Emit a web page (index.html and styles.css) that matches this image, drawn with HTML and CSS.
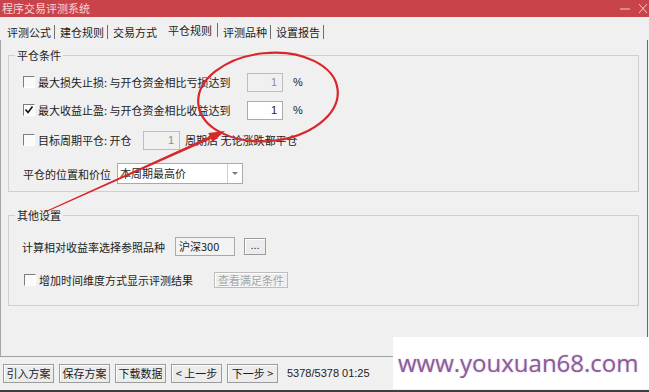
FILE: index.html
```html
<!DOCTYPE html>
<html lang="zh-CN">
<head>
    <meta charset="UTF-8">
    <title>程序交易评测系统</title>
    <link rel="stylesheet" href="styles.css">
</head>
<body>
<div class="window">
    <div class="titlebar">
        <span class="title">程序交易评测系统</span>
        <span class="controls">
            <svg width="11" height="11" viewBox="0 0 11 11"><line x1="0" y1="6" x2="10" y2="6" stroke="#f3c9c9" stroke-width="1"/></svg>
            <svg width="10" height="11" viewBox="0 0 10 11"><path d="M1 1 L9 10 M9 1 L1 10" stroke="#f3c9c9" stroke-width="1" fill="none"/></svg>
        </span>
    </div>

    <div class="tabs">
        <span class="tab">评测公式</span>
        <span class="tab">建仓规则</span>
        <span class="tab pre">交易方式</span>
        <span class="tab active">平仓规则</span>
        <span class="tab">评测品种</span>
        <span class="tab">设置报告</span>
    </div>

    <div class="panel">
        <fieldset class="group close-cond">
            <legend>平仓条件</legend>
            <div class="row row-loss">
                <span class="chk"></span>
                <span class="lbl lbl-long">最大损失止损: 与开仓资金相比亏损达到</span>
                <span class="field num off">1</span>
                <span class="pct">%</span>
            </div>
            <div class="row row-gain">
                <span class="chk"><svg width="10" height="10" viewBox="0 0 10 10"><path d="M1.5 4.5 L4 7.5 L8.5 1.5" stroke="#111" stroke-width="1.6" fill="none"/></svg></span>
                <span class="lbl lbl-long">最大收益止盈: 与开仓资金相比收益达到</span>
                <span class="field num">1</span>
                <span class="pct">%</span>
            </div>
            <div class="row row-period">
                <span class="chk"></span>
                <span class="lbl lbl-mid">目标周期平仓: 开仓</span>
                <span class="field num off short">1</span>
                <span class="lbl after">周期后 无论涨跌都平仓</span>
            </div>
            <div class="row row-price">
                <span class="lbl lbl-pos">平仓的位置和价位</span>
                <span class="combo">
                    <span class="combo-text">本周期最高价</span>
                    <span class="combo-btn"><span class="arrow"></span></span>
                </span>
            </div>
        </fieldset>

        <fieldset class="group other">
            <legend>其他设置</legend>
            <div class="row row-ref">
                <span class="lbl lbl-ref">计算相对收益率选择参照品种</span>
                <span class="field text">沪深300</span>
                <span class="btn dots">...</span>
            </div>
            <div class="row row-time">
                <span class="chk"></span>
                <span class="lbl lbl-time">增加时间维度方式显示评测结果</span>
                <span class="btn show off">查看满足条件</span>
            </div>
        </fieldset>
    </div>

    <div class="toolbar">
        <span class="btn tool">引入方案</span>
        <span class="btn tool">保存方案</span>
        <span class="btn tool">下载数据</span>
        <span class="btn tool">&lt; 上一步</span>
        <span class="btn tool">下一步 &gt;</span>
        <span class="status">5378/5378 01:25</span>
    </div>

    <!-- red hand-drawn marks over the dialog -->
    <svg class="marks" width="649" height="392" viewBox="0 0 649 392">
        <ellipse cx="268" cy="97" rx="70" ry="44" transform="rotate(-6 268 97)" fill="none" stroke="#d8262b" stroke-width="2.2"/>
        <polygon points="45.2,212.4 44.8,211.6 209.8,136.2 211,139" fill="#d8262b"/>
        <polygon points="225,131 208.3,133 212.5,142.2" fill="#d8262b"/>
    </svg>

    <div class="watermark">www.youxuan68.com</div>
</div>
</body>
</html>
```

FILE: styles.css
```css
body {
    margin: 0;
    font-family: "Noto Sans CJK SC", "Liberation Sans", sans-serif;
    font-size: 11px;
    color: #1c1c1c;
}
.window {
    position: relative;
    width: 649px;
    height: 392px;
    background: #f0f0f0;
    overflow: hidden;
}
.titlebar {
    height: 17px;
    background: #c8434a;
    color: #f6d6d6;
    display: flex;
    align-items: center;
    justify-content: space-between;
    padding: 0 1px 0 2px;
}
.title {
    line-height: 17px;
}
.controls {
    display: flex;
    gap: 7px;
}
.tabs {
    height: 23px;
    box-sizing: border-box;
    display: flex;
    align-items: flex-end;
    padding: 0 0 1px 2px;
}
.tab {
    line-height: 14px;
    padding: 0 3px 0 5px;
    border-right: 1px solid #6e6e6e;
}
.tab.pre {
    border-right-color: transparent;
}
.tab.active {
    padding: 0 5px 0 7px;
    margin-bottom: 2px;
}
.panel {
    height: 316px;
    box-sizing: border-box;
    margin-right: 1px;
    padding-top: 8px;
    border-left: 1px solid #a6a6a6;
    border-right: 1px solid #6a6a6a;
}
.group {
    margin: 0 8px 0 7px;
    padding: 0 0 7px 6px;
    border: 1px solid #d0d0d0;
    min-width: 0;
}
.group legend {
    padding: 0 2px;
    line-height: 14px;
}
.other {
    margin-top: 16px;
    padding-bottom: 16px;
}
.row {
    display: flex;
    align-items: center;
    height: 20px;
    margin-left: 8px;
}
.row-loss { margin-top: 10px; }
.row-gain { margin-top: 8px; }
.row-period { margin-top: 10px; }
.row-price { margin-top: 13px; height: 21px; }
.row-ref { margin-top: 15px; height: 19px; margin-left: 7px; }
.row-time { margin-top: 15px; height: 18px; margin-left: 9px; }

.lbl {
    line-height: 14px;
    white-space: nowrap;
}
.lbl-long { width: 209px; }
.lbl-mid { width: 105px; }
.lbl-pos { width: 94px; }
.lbl-ref { width: 153px; }
.lbl-time { width: 176px; }
.after { margin-left: 5px; }
.chk {
    width: 10px;
    height: 10px;
    margin-right: 3px;
    background: #fafafa;
    border-top: 1px solid #7d7d7d;
    border-left: 1px solid #7d7d7d;
    border-right: 1px solid #fff;
    border-bottom: 1px solid #fff;
    display: flex;
}
.field {
    height: 19px;
    box-sizing: border-box;
    border: 1px solid #a9a9a9;
    background: #fff;
    font-family: "Liberation Sans", sans-serif;
    line-height: 17px;
}
.num {
    width: 36px;
    text-align: right;
    padding-right: 5px;
}
.num.short { width: 37px; }
.off {
    background: #f0f0f0;
    color: #8c8c8c;
    border-color: #bdbdbd;
}
.pct {
    margin-left: 10px;
    font-family: "Liberation Sans", sans-serif;
}
.combo {
    width: 126px;
    height: 21px;
    box-sizing: border-box;
    border: 1px solid #a9a9a9;
    background: #fff;
    display: flex;
}
.combo-text {
    flex: 1;
    padding-left: 2px;
    line-height: 19px;
}
.combo-btn {
    width: 14px;
    border-left: 1px solid #cfcfcf;
    display: flex;
    align-items: center;
    justify-content: center;
}
.arrow {
    width: 0;
    height: 0;
    border-left: 3px solid transparent;
    border-right: 3px solid transparent;
    border-top: 3px solid #7a7a7a;
}
.text {
    width: 60px;
    background: #f3f3f3;
    padding-left: 3px;
    font-family: "Noto Sans CJK SC", sans-serif;
}
.btn {
    box-sizing: border-box;
    border: 1px solid #9c9c9c;
    background: #ececec;
    box-shadow: inset 1px 1px 0 #fff;
    text-align: center;
    white-space: nowrap;
}
.dots {
    width: 22px;
    height: 17px;
    margin-left: 9px;
    line-height: 12px;
    font-family: "Liberation Sans", sans-serif;
}
.show {
    width: 74px;
    height: 16px;
    line-height: 14px;
    margin-left: -1px;
}
.btn.off {
    background: #eeeeee;
    color: #a3a3a3;
    border-color: #bcbcbc;
    text-shadow: 1px 1px 0 #fff;
}
.toolbar {
    height: 36px;
    box-sizing: border-box;
    border-top: 1px solid #a0a0a0;
    border-bottom: 2px solid #3e3e3e;
    padding: 7px 0 0 3px;
    display: flex;
    align-items: flex-start;
}
.tool {
    width: 51px;
    height: 19px;
    line-height: 17px;
    margin-right: 5px;
}
.status {
    margin-left: 4px;
    line-height: 19px;
    font-family: "Liberation Sans", sans-serif;
    font-size: 11px;
    color: #222;
}
.marks {
    position: absolute;
    left: 0;
    top: 0;
    pointer-events: none;
}
.watermark {
    position: absolute;
    left: 393px;
    top: 337px;
    width: 256px;
    height: 52px;
    box-sizing: border-box;
    padding-left: 5px;
    background: #fff;
    font-family: "Open Sans", sans-serif;
    font-size: 24px;
    line-height: 52px;
    color: #8a5c97;
    text-shadow: 0 0 2px #d3b6dd;
    white-space: nowrap;
}
```
